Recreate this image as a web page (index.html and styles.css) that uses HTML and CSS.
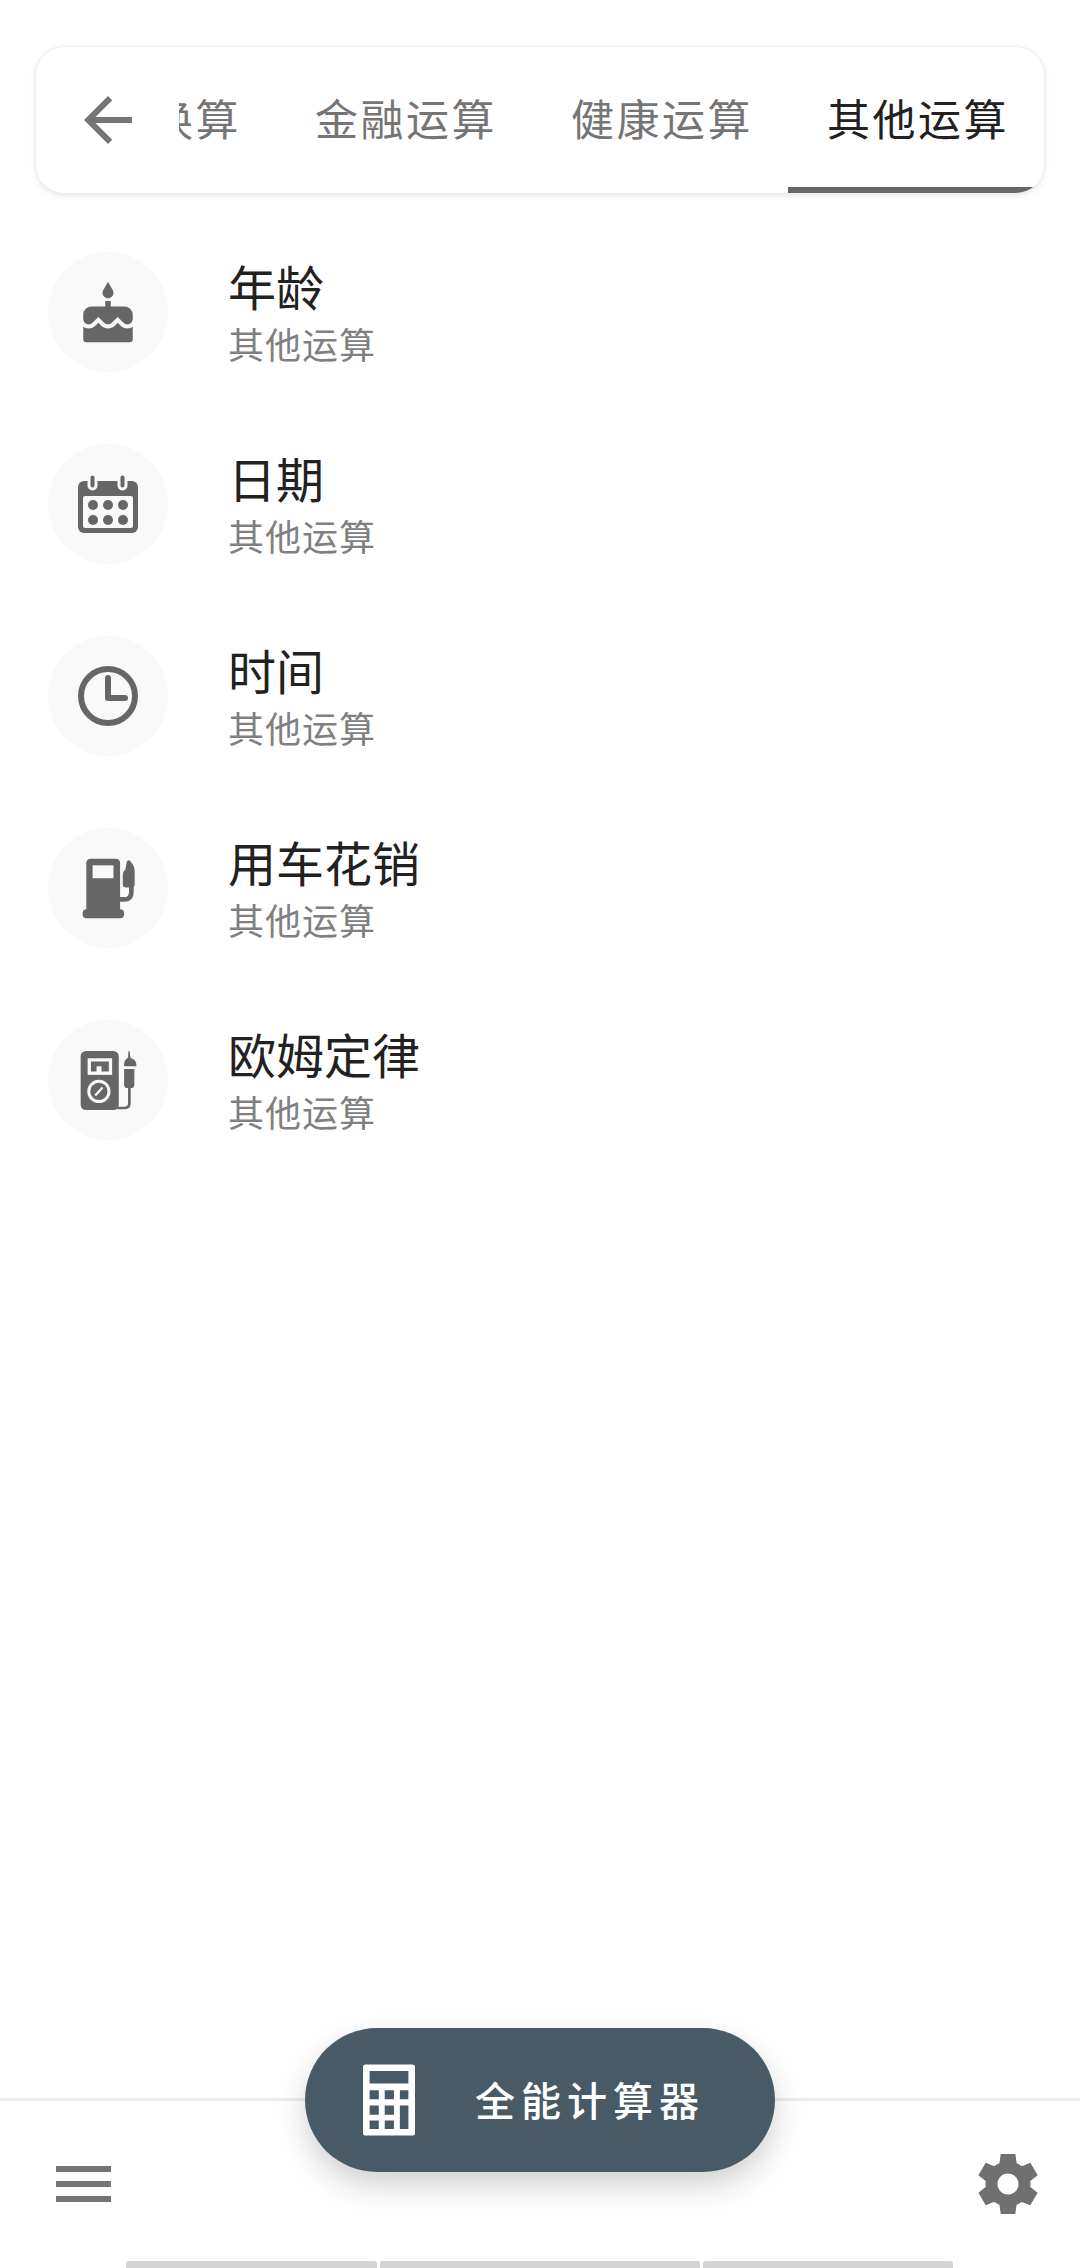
FILE: index.html
```html
<!DOCTYPE html>
<html lang="zh-CN">
<head>
    <meta charset="UTF-8">
    <meta name="viewport" content="width=device-width, initial-scale=1.0">
    <title>全能计算器</title>
    <link rel="stylesheet" href="styles.css">
</head>
<body>
    <div class="page">
        <div class="tab-card">
            <div class="back">
                <svg class="back-icon" viewBox="0 0 24 24"><path d="M20 11H7.83l5.59-5.59L12 4l-8 8 8 8 1.41-1.41L7.83 13H20v-2z"/></svg>
            </div>
            <div class="tabs">
                <div class="tab">单位换算</div>
                <div class="tab">金融运算</div>
                <div class="tab">健康运算</div>
                <div class="tab active">其他运算</div>
            </div>
        </div>

        <div class="list">
            <div class="row">
                <div class="circle">
                    <svg class="icon-cake" viewBox="0 -1 24 24"><path d="M12 6c1.11 0 2-.9 2-2 0-.38-.1-.73-.29-1.03L12 0l-1.71 2.97c-.19.3-.29.65-.29 1.03 0 1.1.9 2 2 2zm4.6 9.99l-1.07-1.07-1.08 1.07c-1.3 1.3-3.58 1.31-4.89 0l-1.07-1.07-1.09 1.07C6.75 16.64 5.88 17 4.96 17c-.73 0-1.4-.23-1.96-.61V21c0 .55.45 1 1 1h16c.55 0 1-.45 1-1v-4.61c-.56.38-1.23.61-1.96.61-.92 0-1.79-.36-2.44-1.01zM18 9h-5V7h-2v2H6c-1.66 0-3 1.34-3 3v1.54c0 1.08.88 1.96 1.96 1.96.52 0 1.02-.2 1.38-.57l2.14-2.13 2.13 2.13c.74.74 2.03.74 2.77 0l2.14-2.13 2.13 2.13c.37.37.86.57 1.38.57 1.08 0 1.96-.88 1.96-1.96V12C21 10.34 19.66 9 18 9z"/></svg>
                </div>
                <div class="text">
                    <div class="title">年龄</div>
                    <div class="sub">其他运算</div>
                </div>
            </div>
            <div class="row">
                <div class="circle">
                    <svg class="icon-60" viewBox="0 0 60 60">
                        <rect x="0" y="7" width="60" height="52" rx="6"/>
                        <rect class="cut" x="5" y="22" width="50" height="32" rx="2"/>
                        <rect x="11" y="0" width="7" height="15" rx="3.5" class="ring"/>
                        <rect x="41" y="0" width="7" height="15" rx="3.5" class="ring"/>
                        <circle cx="15" cy="31" r="5"/><circle cx="30" cy="31" r="5"/><circle cx="45" cy="31" r="5"/>
                        <circle cx="15" cy="46" r="5"/><circle cx="30" cy="46" r="5"/><circle cx="45" cy="46" r="5"/>
                    </svg>
                </div>
                <div class="text">
                    <div class="title">日期</div>
                    <div class="sub">其他运算</div>
                </div>
            </div>
            <div class="row">
                <div class="circle">
                    <svg class="icon-60" viewBox="0 0 60 60">
                        <circle class="line" cx="30" cy="30" r="27" stroke-width="6"/>
                        <path class="line" d="M30 12V32H47" stroke-width="6" stroke-linecap="round" stroke-linejoin="round"/>
                    </svg>
                </div>
                <div class="text">
                    <div class="title">时间</div>
                    <div class="sub">其他运算</div>
                </div>
            </div>
            <div class="row">
                <div class="circle">
                    <svg class="icon-pump" viewBox="155 712 160 182">
                        <path d="M182 713H256Q270 713 270 727V868H168V727Q168 713 182 713Z"/>
                        <rect x="157" y="866" width="125" height="27" rx="12"/>
                        <rect class="cut" x="187" y="733" width="63" height="39"/>
                        <path class="line" d="M268 836H282Q304 836 304 814V790" stroke-width="14"/>
                        <path d="M278 790V762Q278 752 286 746L290 722Q296 714 302 722Q314 734 314 750V790Q314 800 304 800H288Q278 800 278 790Z"/>
                    </svg>
                </div>
                <div class="text">
                    <div class="title">用车花销</div>
                    <div class="sub">其他运算</div>
                </div>
            </div>
            <div class="row">
                <div class="circle">
                    <svg class="icon-meter" viewBox="150 148 172 182">
                        <rect x="152" y="150" width="115" height="178" rx="16"/>
                        <rect class="cut" x="173" y="172" width="74" height="50"/>
                        <path d="M183 182H237V212H215V196H200V212H183Z"/>
                        <circle class="cut" cx="207" cy="272" r="35"/>
                        <circle cx="207" cy="272" r="26"/>
                        <path class="line-cut" d="M196 284L218 260" stroke-width="7"/>
                        <path d="M295 170L296 152Q298 148 300 152L302 170Q320 176 320 190V196H283V190Q283 176 295 170Z"/>
                        <path d="M283 204H314V250Q314 262 304 262H293Q283 262 283 250Z"/>
                        <path class="line" d="M299 260V308Q299 322 285 322H262" stroke-width="8"/>
                    </svg>
                </div>
                <div class="text">
                    <div class="title">欧姆定律</div>
                    <div class="sub">其他运算</div>
                </div>
            </div>
        </div>

        <div class="bottom-bar">
            <div class="fab">
                <svg class="calc-icon" viewBox="0 0 158 216">
                    <path fill-rule="evenodd" d="M8 0H150Q158 0 158 8V208Q158 216 150 216H8Q0 216 0 208V8Q0 0 8 0ZM20 20V58H138V20ZM20 78V106H48V78ZM66 78V106H94V78ZM112 78V106H138V78ZM20 125V153H48V125ZM66 125V153H94V125ZM112 125V196H138V125ZM20 170V196H48V170ZM66 170V196H94V170Z"/>
                </svg>
                <span class="fab-label">全能计算器</span>
            </div>
            <div class="bar-row">
                <div class="menu">
                    <span></span>
                    <span></span>
                    <span></span>
                </div>
                <svg class="gear" viewBox="0 0 24 24"><path d="M19.44 12.99l-.01.02c.04-.33.08-.67.08-1.01 0-.34-.03-.66-.07-.99l.01.02 2.44-1.92-2.43-4.22-2.87 1.16.01.01c-.52-.4-1.09-.74-1.71-1h.01L14.44 2H9.57l-.44 3.07h.01c-.62.26-1.19.6-1.71 1l.01-.01-2.88-1.17-2.44 4.22 2.44 1.92.01-.02c-.04.33-.07.65-.07.99 0 .34.03.68.08 1.01l-.01-.02-2.1 1.65-.33.26 2.43 4.2 2.88-1.15-.02-.04c.53.41 1.1.75 1.73 1.01h-.03L9.58 22h4.85s.03-.18.06-.42l.38-2.65h-.01c.62-.26 1.2-.6 1.73-1.01l-.02.04 2.88 1.15 2.43-4.2s-.14-.12-.33-.26l-2.11-1.66zM12 15.5c-1.93 0-3.5-1.57-3.5-3.5s1.57-3.5 3.5-3.5 3.5 1.57 3.5 3.5-1.57 3.5-3.5 3.5z"/></svg>
            </div>
            <div class="gesture">
                <span class="seg-a"></span>
                <span class="seg-b"></span>
                <span class="seg-c"></span>
            </div>
        </div>
    </div>
</body>
</html>
```

FILE: styles.css
```css
/* General Styles */
body {
    margin: 0;
    background-color: #fff;
    font-family: "Noto Sans CJK SC", "Noto Sans", sans-serif;
}

.page {
    display: flex;
    flex-direction: column;
    height: 2268px;
    overflow: hidden;
}

/* Tab card */
.tab-card {
    display: flex;
    height: 146px;
    margin: 47px 36px 0;
    background-color: #fff;
    border-radius: 28px;
    box-shadow: 0 0 0 1px #eee, 0 2px 6px rgba(0, 0, 0, 0.12);
    overflow: hidden;
    flex-shrink: 0;
}

.back {
    display: flex;
    align-items: center;
    width: 107px;
    padding-left: 36px;
    flex-shrink: 0;
}

.back-icon {
    width: 72px;
    height: 72px;
    fill: #757575;
}

.tabs {
    display: flex;
    justify-content: flex-end;
    flex: 1;
    overflow: hidden;
}

.tab {
    display: flex;
    align-items: center;
    justify-content: center;
    width: 256px;
    flex-shrink: 0;
    box-sizing: border-box;
    padding-left: 4px;
    border-bottom: 6px solid transparent;
    font-size: 43px;
    letter-spacing: 2.5px;
    color: #757575;
}

.tab.active {
    color: #212121;
    border-bottom-color: #666;
}

/* List */
.list {
    display: flex;
    flex-direction: column;
    flex: 1;
    padding-top: 23px;
}

.row {
    display: flex;
    align-items: center;
    height: 192px;
    padding-left: 48px;
}

.circle {
    display: flex;
    align-items: center;
    justify-content: center;
    width: 120px;
    height: 120px;
    border-radius: 50%;
    background-color: #f9f9f9;
    flex-shrink: 0;
}

.circle svg {
    fill: #666;
}

.icon-cake {
    width: 66px;
    height: 66px;
}

.icon-60 {
    width: 60px;
    height: 60px;
}

.icon-pump {
    width: 53px;
    height: 61px;
}

.icon-meter {
    width: 57px;
    height: 61px;
}

.circle svg .cut {
    fill: #f9f9f9;
}

.circle svg .ring {
    stroke: #f9f9f9;
    stroke-width: 3;
}

.circle svg .line {
    fill: none;
    stroke: #666;
}

.circle svg .line-cut {
    fill: none;
    stroke: #f9f9f9;
}

.text {
    margin-left: 60px;
}

.title {
    font-size: 48px;
    line-height: 62px;
    color: #212121;
}

.sub {
    font-size: 36px;
    line-height: 54px;
    letter-spacing: 1px;
    color: #808080;
}

/* Bottom bar */
.bottom-bar {
    position: relative;
    display: flex;
    flex-direction: column;
    height: 170px;
    box-sizing: border-box;
    border-top: 3px solid #ececec;
    flex-shrink: 0;
}

.fab {
    position: absolute;
    top: -73px;
    left: 305px;
    display: flex;
    align-items: center;
    width: 470px;
    height: 144px;
    box-sizing: border-box;
    padding-left: 58px;
    border-radius: 72px;
    background-color: #475a65;
    box-shadow: 0 14px 30px rgba(0, 0, 0, 0.18);
}

.calc-icon {
    width: 52px;
    height: 72px;
    fill: #fff;
}

.fab-label {
    margin-left: 60px;
    padding-bottom: 2px;
    font-size: 40px;
    font-weight: 500;
    letter-spacing: 6px;
    color: #fff;
}

.bar-row {
    display: flex;
    align-items: center;
    justify-content: space-between;
    flex: 1;
    padding: 5px 36px 0 56px;
}

.menu {
    display: flex;
    flex-direction: column;
    gap: 9px;
    width: 55px;
}

.menu span {
    height: 6px;
    background-color: #757575;
}

.gear {
    width: 72px;
    height: 72px;
    fill: #707070;
}

.gesture {
    display: flex;
    gap: 3px;
    height: 7px;
    padding-left: 126px;
}

.gesture span {
    background-color: #d4d4d4;
    border-radius: 3px 3px 0 0;
}

.seg-a {
    width: 251px;
}

.seg-b {
    width: 320px;
}

.seg-c {
    width: 250px;
}
```
